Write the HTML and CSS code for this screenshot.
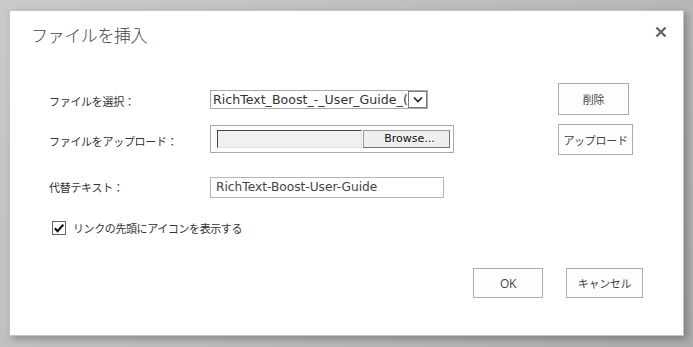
FILE: index.html
```html
<!DOCTYPE html>
<html lang="ja">
<head>
<meta charset="utf-8">
<title>ファイルを挿入</title>
<link rel="stylesheet" href="styles.css">
</head>
<body>
<div class="dialog">
  <div class="header">
    <div class="title">ファイルを挿入</div>
    <div class="close" aria-label="閉じる">
      <svg width="12" height="12" viewBox="0 0 12 12"><path d="M1.5 1.5 L10.5 10.5 M10.5 1.5 L1.5 10.5" stroke="#666" stroke-width="2.4" stroke-linecap="butt"/></svg>
    </div>
  </div>
  <div class="form">
    <div class="row row-select">
      <div class="label">ファイルを選択：</div>
      <div class="control">
        <div class="select">
          <span class="select-text">RichText_Boost_-_User_Guide_(1).pdf</span>
          <span class="select-arrow"><svg width="10" height="7" viewBox="0 0 10 7"><path d="M1 1.5 L5 5.5 L9 1.5" fill="none" stroke="#222" stroke-width="1.6"/></svg></span>
        </div>
      </div>
      <button class="btn btn-delete">削除</button>
    </div>
    <div class="row row-upload">
      <div class="label">ファイルをアップロード：</div>
      <div class="control">
        <div class="file">
          <span class="file-field"></span>
          <span class="file-browse">Browse...</span>
        </div>
      </div>
      <button class="btn btn-upload">アップロード</button>
    </div>
    <div class="row row-alt">
      <div class="label">代替テキスト：</div>
      <div class="control">
        <div class="textbox">RichText-Boost-User-Guide</div>
      </div>
    </div>
    <div class="check-row">
      <span class="checkbox"><svg width="12" height="12" viewBox="0 0 12 12"><path d="M1.8 6.2 L4.6 9.2 L10.3 2.6" fill="none" stroke="#111" stroke-width="2.2"/></svg></span>
      <span class="check-label">リンクの先頭にアイコンを表示する</span>
    </div>
  </div>
  <div class="footer">
    <button class="btn btn-ok">OK</button>
    <button class="btn btn-cancel">キャンセル</button>
  </div>
</div>
</body>
</html>
```
FILE: styles.css
```css
html, body {
  margin: 0;
  height: 100%;
  overflow: hidden;
}
body {
  background: linear-gradient(135deg, #cacaca 0%, #b9b9b9 60%, #ababab 100%);
  padding: 10px 0 0 9px;
  box-sizing: border-box;
  font-family: "Noto Sans CJK JP", "Liberation Sans", sans-serif;
  color: #444;
}
.dialog {
  width: 675px;
  height: 326px;
  box-sizing: border-box;
  background: #fff;
  border: 1px solid #c4c4c4;
  box-shadow: 3px 3px 7px rgba(0, 0, 0, 0.28);
  padding: 12px 16px 0 21px;
}
.header {
  display: flex;
  justify-content: space-between;
  align-items: flex-start;
  height: 24px;
}
.title {
  font-size: 17px;
  line-height: 24px;
  font-weight: 300;
  color: #444;
  letter-spacing: -0.4px;
}
.close {
  width: 12px;
  height: 12px;
  margin-top: 3px;
  display: flex;
}
.form {
  margin-top: 36px;
  padding-left: 18px;
}
.row {
  display: flex;
  align-items: center;
}
.row-select { height: 32px; margin-bottom: 9px; }
.row-upload { height: 31px; margin-bottom: 22px; }
.row-alt { height: 20px; }
.label {
  width: 161px;
  font-size: 11px;
  line-height: 14px;
  color: #333;
  padding-top: 3px;
  letter-spacing: -0.3px;
}
.row-alt .label { padding-top: 0; }
.control {
  width: 348px;
  display: flex;
  align-items: center;
}
.select {
  width: 218px;
  height: 19px;
  box-sizing: border-box;
  border: 1px solid #a9a9a9;
  display: flex;
  align-items: center;
  background: #fff;
  overflow: hidden;
}
.select-text {
  flex: 1;
  overflow: hidden;
  white-space: nowrap;
  font-family: "DejaVu Sans", "Liberation Sans", sans-serif;
  font-size: 12.6px;
  line-height: 17px;
  color: #333;
  padding-left: 2px;
}
.select-arrow {
  width: 19px;
  height: 17px;
  flex: none;
  box-sizing: border-box;
  border: 1px solid #7a7a7a;
  display: flex;
  align-items: center;
  justify-content: center;
  background: #fff;
}
.file {
  width: 244px;
  height: 28px;
  box-sizing: border-box;
  border: 1px solid #a9a9a9;
  display: flex;
  align-items: center;
  padding-left: 6px;
  margin-top: -2px;
}
.file-field {
  width: 145px;
  height: 18px;
  box-sizing: border-box;
  background: #f0f0f0;
  border-top: 1px solid #444;
  border-left: 1px solid #444;
  border-right: 1px solid #e3e3e3;
  border-bottom: 1px solid #e3e3e3;
}
.file-browse {
  width: 87px;
  height: 18px;
  box-sizing: border-box;
  margin-left: 1px;
  border: 1px solid #707070;
  border-top-color: #9a9a9a;
  border-left-color: #9a9a9a;
  background: #efefef;
  font-family: "DejaVu Sans", "Liberation Sans", sans-serif;
  font-size: 11px;
  line-height: 16px;
  color: #111;
  text-align: center;
  padding-left: 6px;
}
.textbox {
  width: 234px;
  height: 21px;
  box-sizing: border-box;
  border: 1px solid #b5b5b5;
  font-family: "DejaVu Sans", "Liberation Sans", sans-serif;
  font-size: 12.2px;
  line-height: 19px;
  color: #444;
  padding-left: 5px;
  white-space: nowrap;
  overflow: hidden;
}
.btn {
  box-sizing: border-box;
  border: 1px solid #ababab;
  background: #fdfdfd;
  color: #444;
  font-family: "Noto Sans CJK JP", "Liberation Sans", sans-serif;
  font-size: 11px;
  padding: 0;
  margin: 0;
  letter-spacing: -0.3px;
}
.btn-delete { width: 71px; height: 32px; }
.btn-upload { width: 75px; height: 31px; }
.check-row {
  margin-top: 24px;
  padding-left: 3px;
  display: flex;
  align-items: center;
  height: 14px;
}
.checkbox {
  width: 14px;
  height: 14px;
  box-sizing: border-box;
  border: 1px solid #666;
  background: #fff;
  display: flex;
  align-items: center;
  justify-content: center;
}
.check-label {
  margin-left: 7px;
  font-size: 11px;
  color: #333;
  letter-spacing: -0.4px;
}
.footer {
  margin-top: 33px;
  margin-right: 24px;
  display: flex;
  justify-content: flex-end;
  gap: 23px;
}
.btn-ok {
  width: 70px;
  height: 30px;
  font-family: "Open Sans", "Liberation Sans", sans-serif;
  font-size: 12px;
}
.btn-cancel { width: 77px; height: 30px; }
```
